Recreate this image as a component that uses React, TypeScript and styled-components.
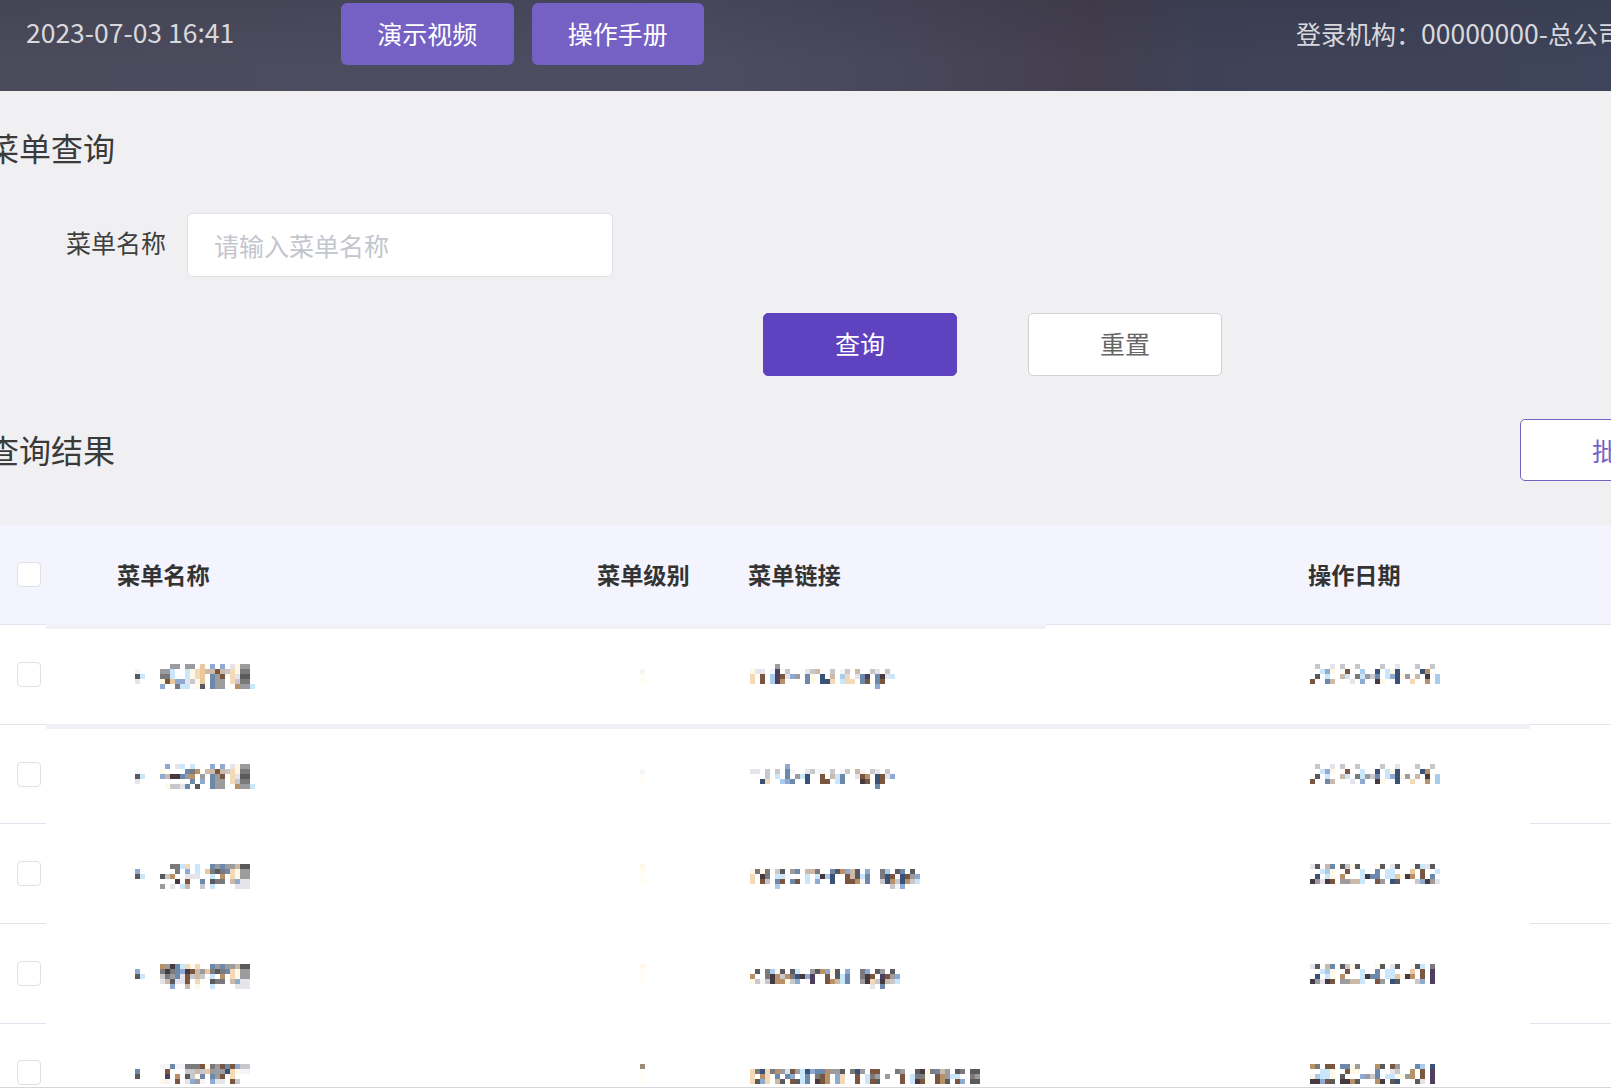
import React from "react";
import styled, {createGlobalStyle} from "styled-components";

const GlobalStyle = createGlobalStyle`
    html, body {
        margin: 0;
        padding: 0;
        background: #f0f0f3;
        font-family: "Noto Sans CJK SC", "Noto Sans", sans-serif;
    }
    * {
        box-sizing: border-box;
    }
`

const Viewport = styled.div`
    width: 1611px;
    height: 1088px;
    overflow: hidden;
    border-bottom: 1px solid #d6d6da;
`

const Page = styled.div`
    width: 1764px;
`

const TopBar = styled.header`
    height: 91px;
    display: flex;
    align-items: flex-start;
    padding-left: 26px;
    color: #d9d9dd;
    font-size: 25px;
    white-space: nowrap;
    background:
        linear-gradient(180deg, rgba(20, 20, 30, .12), rgba(20, 20, 30, 0) 70%),
        linear-gradient(90deg, #4b4b5c 0%, #4c4d62 40%, #484659 52%, #443f4f 62%, #3f4257 68%, #3e455c 100%);
`

const Clock = styled.div`
    width: 315px;
    font-size: 26.5px;
    line-height: 64px;
`

const DemoButton = styled.button`
    width: 172.5px;
    height: 62px;
    margin: 3px 18px 0 0;
    padding-bottom: 4px;
    border: none;
    border-radius: 6px;
    background: #7561c4;
    color: #fff;
    font: inherit;
`

const OrgLabel = styled.div`
    margin-left: 574px;
    line-height: 66px;
`

const OrgCode = styled.span`
    font-size: 26.5px;
`

const Title = styled.h2`
    margin: 0 0 0 -13px;
    font-size: 32px;
    font-weight: 400;
    line-height: 42px;
    padding-bottom: 2px;
    color: #3a3a3a;
`

const SearchSection = styled.section`
    padding-top: 35px;
`

const FormRow = styled.div`
    display: flex;
    margin-top: 43px;
    padding-left: 66px;
`

const FieldLabel = styled.label`
    width: 121px;
    font-size: 25px;
    line-height: 58px;
    color: #3f3f3f;
`

const TextInput = styled.input`
    width: 426px;
    height: 64px;
    padding: 0 26px;
    border: 1px solid #e0e1e6;
    border-radius: 6px;
    background: #fff;
    font: inherit;
    font-size: 25px;
    outline: none;
    &::placeholder {
        color: #c3c6cd;
    }
`

const FormActions = styled.div`
    display: flex;
    gap: 71px;
    margin-top: 36px;
    padding-left: 763px;
`

const ActionButton = styled.button<{$primary?: boolean}>`
    width: 194px;
    height: 63px;
    padding-bottom: 5px;
    border: 1px solid ${p => p.$primary ? "#5e42c0" : "#d0d0d5"};
    border-radius: 5px;
    background: ${p => p.$primary ? "#5e42c0" : "#fff"};
    color: ${p => p.$primary ? "#fff" : "#666"};
    font: inherit;
    font-size: 25px;
`

const ResultHead = styled.div`
    display: flex;
    justify-content: space-between;
    align-items: center;
    height: 62px;
    margin-top: 43px;
`

const BatchButton = styled.button`
    width: 244px;
    height: 62px;
    border: 1px solid #7561c4;
    border-radius: 5px;
    background: #fff;
    color: #7561c4;
    font: inherit;
    font-size: 25px;
`

const columns = "117px 480px 151px 560px 1fr";

const TableHead = styled.div`
    display: grid;
    grid-template-columns: ${columns};
    align-items: center;
    height: 99px;
    margin-top: 44px;
    background: #f3f4fd;
    color: #333;
    font-size: 23.2px;
    font-weight: 700;
`

const HeadLabel = styled.div`
    padding-bottom: 2px;
`

const Box = styled.span<{$top?: number}>`
    display: block;
    width: 24px;
    height: 25px;
    margin: ${p => p.$top ?? 0}px 0 0 17px;
    border: 1px solid #dfe1e8;
    border-radius: 4px;
    background: #fff;
`

const Seam = styled.div<{$band: number}>`
    display: grid;
    grid-template-columns: 46px ${p => p.$band}px 1fr;
    height: 5px;
    background: #fff;
`

const SeamEdge = styled.div`
    border-top: 1px solid #e2e5ef;
`

const SeamBand = styled.div<{$gray: boolean}>`
    background: ${p => p.$gray ? "#f0f1f4" : "#fff"};
`

const RowBody = styled.div<{$height: number}>`
    display: grid;
    grid-template-columns: ${columns};
    align-items: start;
    height: ${p => p.$height}px;
    background: #fff;
`

const Cell = styled.div<{$inset: number; $top: number}>`
    padding: ${p => p.$top}px 0 0 ${p => p.$inset}px;
    line-height: 0;
`

const palette: Record<string, string> = {
    a: "#f3d9b5", b: "#e8c89c", c: "#b99168", d: "#7a5540", e: "#463a42", f: "#5a5a5c",
    g: "#7a7a7c", h: "#9c9c9e", i: "#c8c8cc", j: "#e4e4ea", k: "#c9e6fb", l: "#a8cdec",
    m: "#8eaad0", n: "#6c88aa", o: "#3a5278", p: "#4e3f60", q: "#fff8e6", r: "#cdb9a8",
    s: "#f5f4f6", t: "#fffdf4", u: "#9a8a78",
};

function Blurred({rows}: {rows: string[]}): React.ReactElement {
    const width = Math.max(...rows.map(r => r.length));
    return (
        <svg width={width * 5} height={rows.length * 5} shapeRendering="crispEdges">
            {rows.map((row, y) => row.split("").map((ch, x) => palette[ch]
                ? <rect key={`${x}-${y}`} x={x * 5} y={y * 5} width={5} height={5} fill={palette[ch]}/>
                : null))}
        </svg>
    );
}

const rows = [
    {
        band: 1000, gray: true, height: 95, boxTop: 33, markTop: 35,
        name: [
            ".......hh.hh.b.m.m.jqhh.",
            "s....hhk..kqabrrdriaqgg.",
            "fk...ggk..kqab.nhd.ajff.",
            "j....qdbmmjiqb.nhh.aigg.",
            ".....m..gkk.qf.nhh..chhk",
        ],
        level: [".", "s", "t", "t"],
        link: [
            ".....h",
            "qjj.sp.i...jir..i.si.r..ij.i.",
            "a.d.lpdjmh.nq.o.r.la.jnp.nejk",
            "a.d.lpc....nq.ooa.kaa.nd.nd..",
            ".........................m",
        ],
        date: [
            ".i..j.i..i....i..j...i..i.",
            "..kmq..d..l..o.kqo....oc..",
            ".f.k..rk.gkhin.kmoqh.r.e.l",
            "d..nr...j.m..eq..o..a..c.l",
        ],
    },
    {
        band: 1484, gray: true, height: 94, boxTop: 33, markTop: 35,
        name: [
            "......m.jk.k...m.m.jqhh.",
            "s....q....ngc.rrdriaqgg.",
            "fk...mreenhc.h.nhd.ajff.",
            "j..........n.m.nhh.aigg.",
            "......qiijn.f..nhh..chhk",
        ],
        level: [".", "s", "t", "t"],
        link: [
            ".......m",
            "jj.i.i.ns..jiss.i.si.rs.ij.i.",
            "...i.k.n.hko..d.rkn..jdc.odjm",
            "..oa..lmn..o..dd.kn...ed.od..",
            ".........................n",
        ],
        date: [
            ".i..j.i..i....i..j...i..i.",
            "..kmq..d..k..o.kqo....oc..",
            ".f.k..rk.gkhin.kmoqh.r.e.l",
            "d..nr...j.m..eq..o..a..c.l",
        ],
    },
    {
        band: 1484, gray: false, height: 95, boxTop: 33, markTop: 36,
        name: [
            ".......ggka.k..nhnhhrff",
            "m.......g.m.k.bgfgnaqhh",
            "fk...fic..jjj..k.c.aqhh",
            "........e.d..n.fgg.rmjj",
            ".....h.j.kr..i.k....jjj",
        ],
        level: ["q", "t", "t", "t"],
        link: [
            "",
            "qgqg.if.hn.rrg..nfcmrf.m..gl.fn.f",
            "a.eg.kks...k.kelo..drfkn..godsodhm",
            "a.di.nd.nd.k.m..o..ddcsn..iociocik",
            ".....l......................ism",
        ],
        date: [
            "jf.rn.fiqf...qf.jf...fkjf.",
            "..klq..d..k..n.kk...b.d..k",
            ".o.kq.c...kenn.kkbqec.d.n.",
            "ehjed.hhrrk..dh.of...imehj",
        ],
    },
    {
        band: 1484, gray: false, height: 95, boxTop: 33, markTop: 36,
        name: [
            ".....chenkaqa..nhnhhrff",
            "m....gegnmedrhbgfgnaqhh",
            "fk...ighnjdiri.k.c.aqhh",
            ".....jrfjjd.a..fgg.rmjj",
            ".......m..r.q..k....jjj",
        ],
        level: ["q", "t", "t", "t"],
        link: [
            "",
            ".f.glqf.fk..hfcmqf.m..gm.fh.f",
            "c..gecicgoemp..d.fkn..ged.pdhm",
            "qisieccqim..p..dcrkn..heaierik",
            "........................j.n",
        ],
        date: [
            "jf.rn.fiqf...qf.jf...fk.g.",
            "..klq..d..k..n.kk...b.d.p.",
            ".o.kq.c...kenn.kkbqec.d.p.",
            "ehjed.hhrrk..dh.of...im.p.",
        ],
    },
    {
        band: 1484, gray: false, height: 60, boxTop: 32, markTop: 36,
        name: [
            ".....ssnssgggdqghdndmii",
            "n.....d...iiribhhhoaqss",
            "f.....p.c.fiqn.nhd.a...",
            ".....qs.d.jmhs.mjj.di..",
        ],
        level: ["u", "t", "t", "t"],
        link: [
            "",
            "agoagchkdhkomnnchhf.goh.dd...gh..feqgnrh.fg.ff",
            "a.ca.n.nm.kn.gdc.ma..d.kgh.h..d.kggq.dchkk..gh",
            "afma.rf.dfkn.edc.ma..d.kdf....d.kedq.dcf.dm.ff",
        ],
        date: [
            "cg.dd.nnqh...cf.dh...nl.o.",
            "..kkq..dqq...n..ji..c.d.p.",
            "qlkkq.f...mhin.kkqqhc.d.p.",
            "eemdf.eecf...ce.fo...fj.p.",
        ],
    },
];

export default function App(): React.ReactElement {
    return (
        <Viewport>
            <GlobalStyle/>
            <Page>
                <TopBar>
                    <Clock>2023-07-03 16:41</Clock>
                    <DemoButton>演示视频</DemoButton>
                    <DemoButton>操作手册</DemoButton>
                    <OrgLabel>登录机构：<OrgCode>00000000-</OrgCode>总公司</OrgLabel>
                </TopBar>

                <SearchSection>
                    <Title>菜单查询</Title>
                    <FormRow>
                        <FieldLabel>菜单名称</FieldLabel>
                        <TextInput placeholder="请输入菜单名称"/>
                    </FormRow>
                    <FormActions>
                        <ActionButton $primary>查询</ActionButton>
                        <ActionButton>重置</ActionButton>
                    </FormActions>
                </SearchSection>

                <ResultHead>
                    <Title>查询结果</Title>
                    <BatchButton>批量删除</BatchButton>
                </ResultHead>

                <TableHead>
                    <Box/>
                    <HeadLabel>菜单名称</HeadLabel>
                    <HeadLabel>菜单级别</HeadLabel>
                    <HeadLabel>菜单链接</HeadLabel>
                    <HeadLabel>操作日期</HeadLabel>
                </TableHead>

                {rows.map((row, i) => (
                    <React.Fragment key={i}>
                        <Seam $band={row.band}>
                            <SeamEdge/>
                            <SeamBand $gray={row.gray}/>
                            <SeamEdge/>
                        </Seam>
                        <RowBody $height={row.height}>
                            <Box $top={row.boxTop}/>
                            <Cell $inset={18} $top={row.markTop}><Blurred rows={row.name}/></Cell>
                            <Cell $inset={43} $top={row.markTop}><Blurred rows={row.level}/></Cell>
                            <Cell $inset={2} $top={row.markTop}><Blurred rows={row.link}/></Cell>
                            <Cell $inset={2} $top={row.markTop}><Blurred rows={row.date}/></Cell>
                        </RowBody>
                    </React.Fragment>
                ))}
            </Page>
        </Viewport>
    );
}
